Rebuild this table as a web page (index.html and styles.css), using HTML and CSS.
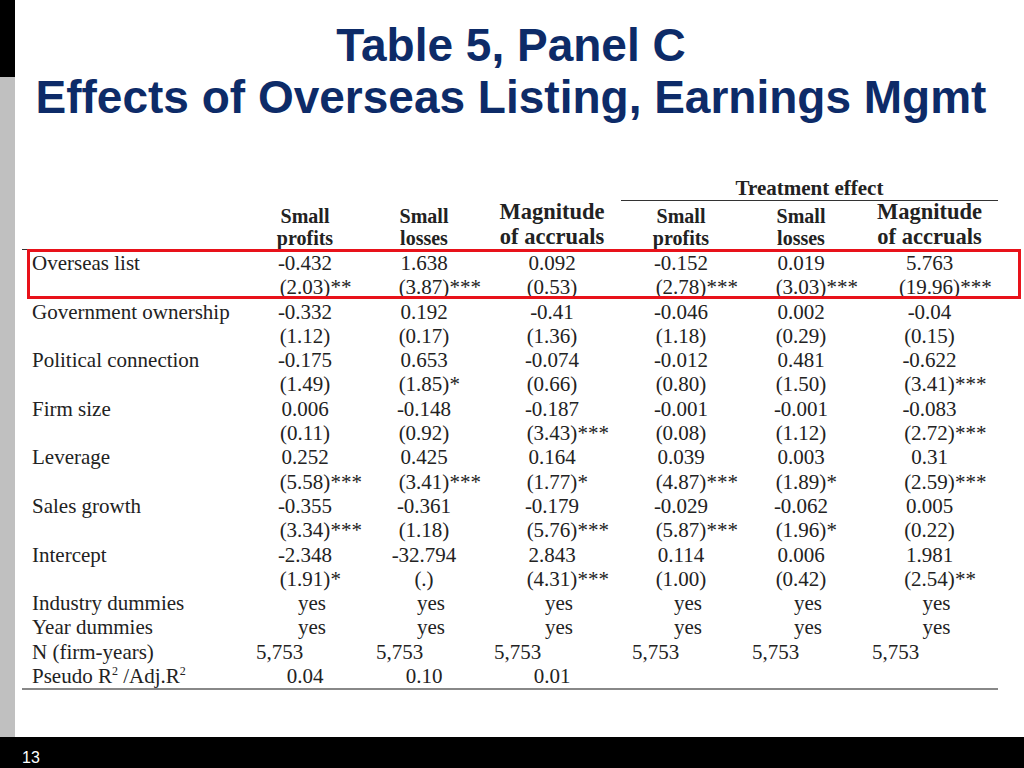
FILE: index.html
```html
<!DOCTYPE html>
<html>
<head>
<meta charset="utf-8">
<link rel="stylesheet" href="styles.css">
</head>
<body>
<div class="slide">
  <div class="main">
    <div class="stripe"><div class="stripe-top"></div></div>
    <div class="content">
      <h1 class="title">Table 5, Panel C<br>Effects of Overseas Listing, Earnings Mgmt</h1>
      <div class="table-wrap">
        <div class="row group-row">
          <div class="group-head">Treatment effect</div>
        </div>
        <div class="row head-row">
          <div></div>
          <div class="h">Small<br>profits</div>
          <div class="h">Small<br>losses</div>
          <div class="h big">Magnitude<br>of accruals</div>
          <div class="h">Small<br>profits</div>
          <div class="h">Small<br>losses</div>
          <div class="h big">Magnitude<br>of accruals</div>
        </div>
        <div class="body">
          <div class="row"><div class="lab">Overseas list</div><div>-0.432</div><div>1.638</div><div>0.092</div><div>-0.152</div><div>0.019</div><div>5.763</div></div>
          <div class="row"><div class="lab"></div><div>(2.03)<span class="st">**</span></div><div>(3.87)<span class="st">***</span></div><div>(0.53)</div><div>(2.78)<span class="st">***</span></div><div>(3.03)<span class="st">***</span></div><div>(19.96)<span class="st">***</span></div></div>
          <div class="row"><div class="lab">Government ownership</div><div>-0.332</div><div>0.192</div><div>-0.41</div><div>-0.046</div><div>0.002</div><div>-0.04</div></div>
          <div class="row"><div class="lab"></div><div>(1.12)</div><div>(0.17)</div><div>(1.36)</div><div>(1.18)</div><div>(0.29)</div><div>(0.15)</div></div>
          <div class="row"><div class="lab">Political connection</div><div>-0.175</div><div>0.653</div><div>-0.074</div><div>-0.012</div><div>0.481</div><div>-0.622</div></div>
          <div class="row"><div class="lab"></div><div>(1.49)</div><div>(1.85)<span class="st">*</span></div><div>(0.66)</div><div>(0.80)</div><div>(1.50)</div><div>(3.41)<span class="st">***</span></div></div>
          <div class="row"><div class="lab">Firm size</div><div>0.006</div><div>-0.148</div><div>-0.187</div><div>-0.001</div><div>-0.001</div><div>-0.083</div></div>
          <div class="row"><div class="lab"></div><div>(0.11)</div><div>(0.92)</div><div>(3.43)<span class="st">***</span></div><div>(0.08)</div><div>(1.12)</div><div>(2.72)<span class="st">***</span></div></div>
          <div class="row"><div class="lab">Leverage</div><div>0.252</div><div>0.425</div><div>0.164</div><div>0.039</div><div>0.003</div><div>0.31</div></div>
          <div class="row"><div class="lab"></div><div>(5.58)<span class="st">***</span></div><div>(3.41)<span class="st">***</span></div><div>(1.77)<span class="st">*</span></div><div>(4.87)<span class="st">***</span></div><div>(1.89)<span class="st">*</span></div><div>(2.59)<span class="st">***</span></div></div>
          <div class="row"><div class="lab">Sales growth</div><div>-0.355</div><div>-0.361</div><div>-0.179</div><div>-0.029</div><div>-0.062</div><div>0.005</div></div>
          <div class="row"><div class="lab"></div><div>(3.34)<span class="st">***</span></div><div>(1.18)</div><div>(5.76)<span class="st">***</span></div><div>(5.87)<span class="st">***</span></div><div>(1.96)<span class="st">*</span></div><div>(0.22)</div></div>
          <div class="row"><div class="lab">Intercept</div><div>-2.348</div><div>-32.794</div><div>2.843</div><div>0.114</div><div>0.006</div><div>1.981</div></div>
          <div class="row"><div class="lab"></div><div>(1.91)<span class="st">*</span></div><div>(.)</div><div>(4.31)<span class="st">***</span></div><div>(1.00)</div><div>(0.42)</div><div>(2.54)<span class="st">**</span></div></div>
          <div class="row yes-row"><div class="lab">Industry dummies</div><div>yes</div><div>yes</div><div>yes</div><div>yes</div><div>yes</div><div>yes</div></div>
          <div class="row yes-row"><div class="lab">Year dummies</div><div>yes</div><div>yes</div><div>yes</div><div>yes</div><div>yes</div><div>yes</div></div>
          <div class="row n-row"><div class="lab">N (firm-years)</div><div>5,753</div><div>5,753</div><div>5,753</div><div>5,753</div><div>5,753</div><div>5,753</div></div>
          <div class="row"><div class="lab">Pseudo R<sup>2</sup> /Adj.R<sup>2</sup></div><div>0.04</div><div>0.10</div><div>0.01</div><div></div><div></div><div></div></div>
        </div>
        <div class="highlight"></div>
      </div>
    </div>
  </div>
  <footer class="footer"><span class="page-num">13</span></footer>
</div>
</body>
</html>
```
FILE: styles.css
```css
html, body {
  margin: 0;
  padding: 0;
  background: #ffffff;
}

.slide {
  width: 1024px;
  height: 768px;
  display: flex;
  flex-direction: column;
  overflow: hidden;
}

.main {
  height: 737px;
  display: flex;
}

.stripe {
  width: 15px;
  flex: 0 0 15px;
  background: #c0c0c0;
}

.stripe-top {
  height: 77px;
  background: #000000;
}

.content {
  flex: 1;
  display: flex;
  flex-direction: column;
}

.title {
  margin: 0;
  padding: 19px 17px 0 0;
  font-family: "Liberation Sans", Arial, sans-serif;
  font-weight: bold;
  font-size: 46px;
  line-height: 52px;
  color: #0d2b68;
  text-align: center;
}

.table-wrap {
  position: relative;
  margin: 54px 0 0 7px;
  width: 976px;
  font-family: "Liberation Serif", "Times New Roman", serif;
  font-size: 21px;
  color: #222222;
}

.row {
  display: grid;
  grid-template-columns: 223px 120px 118px 138px 120px 120px 137px;
  height: 24.3px;
  line-height: 24.3px;
}

.row > div {
  text-align: center;
  white-space: nowrap;
}

.row > .lab {
  text-align: left;
  padding-left: 10px;
}

.st {
  display: inline-block;
  width: 0;
  overflow: visible;
  text-align: left;
}

.group-row {
  height: 23px;
  line-height: 23px;
}

.group-head {
  grid-column: 5 / 8;
  font-weight: bold;
  font-size: 21px;
  border-bottom: 1px solid #333333;
}

.head-row {
  height: auto;
  align-items: end;
  border-bottom: 1px solid #333333;
}

.h {
  font-weight: bold;
  font-size: 20px;
  line-height: 22px;
}

.h.big {
  font-size: 22.5px;
  line-height: 24.5px;
}

.body {
  padding-top: 1px;
  border-bottom: 2px solid #888888;
}

.yes-row > div:not(.lab) {
  padding-left: 14px;
}

.n-row > div:not(.lab) {
  text-align: left;
  padding-left: 11px;
}

sup {
  font-size: 12px;
  line-height: 0;
  vertical-align: 8px;
}

.highlight {
  position: absolute;
  left: 5px;
  top: 72px;
  width: 988px;
  height: 44px;
  border: 3px solid #e8121a;
}

.footer {
  height: 31px;
  box-sizing: border-box;
  background: #000000;
  padding: 13px 0 0 22px;
}

.page-num {
  font-family: "Liberation Sans", Arial, sans-serif;
  font-size: 16px;
  line-height: 16px;
  color: #ffffff;
  display: block;
}
```
